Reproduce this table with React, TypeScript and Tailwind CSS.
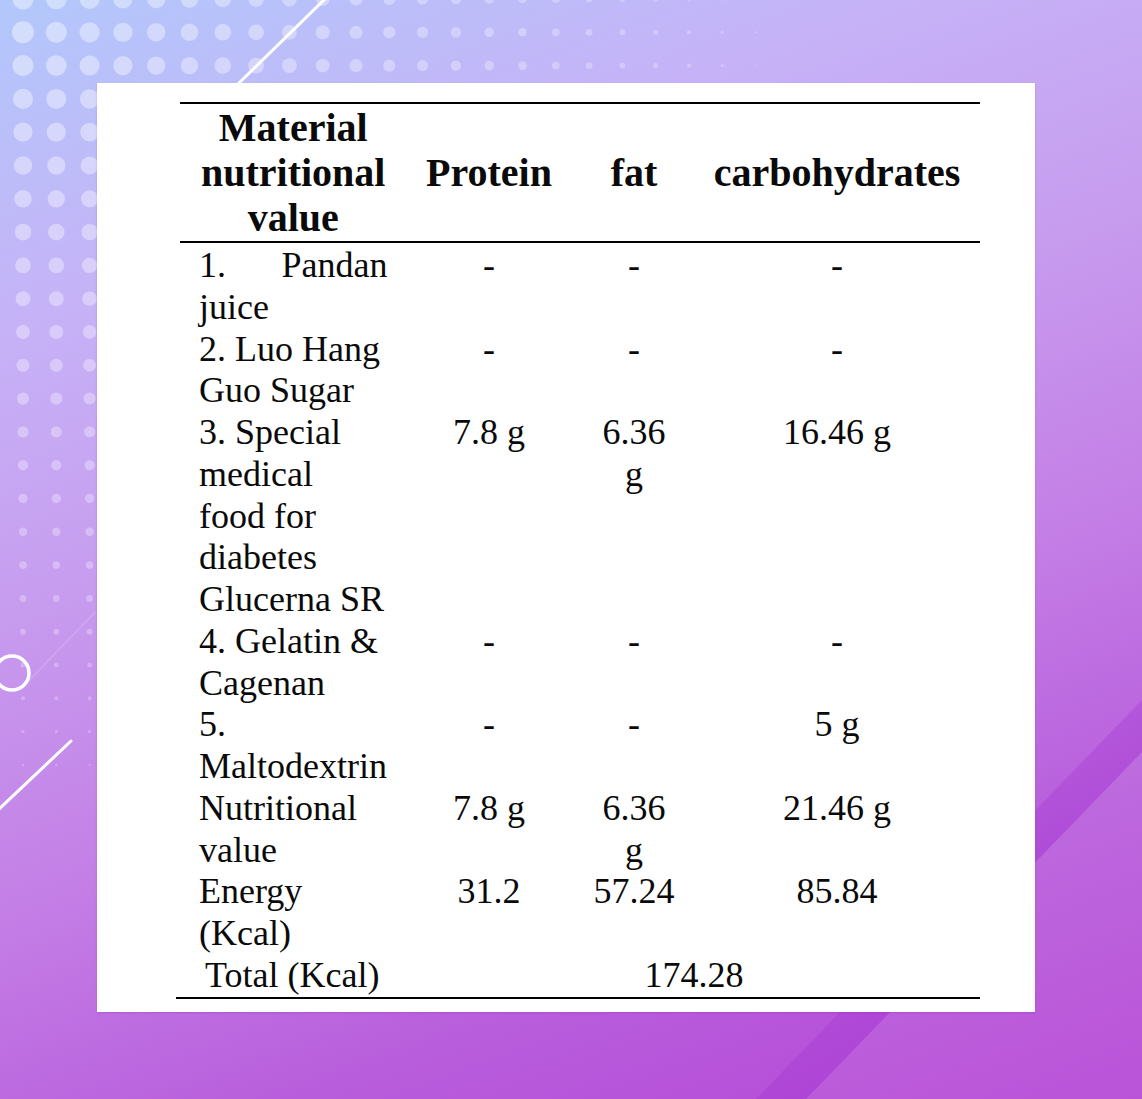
import React from 'react';

type Row = {
  label: string;
  protein: string;
  fat: string;
  carbs: string;
  justify?: boolean;
};

const rows: Row[] = [
  { label: '1. Pandan juice', protein: '-', fat: '-', carbs: '-', justify: true },
  { label: '2. Luo Hang Guo Sugar', protein: '-', fat: '-', carbs: '-' },
  { label: '3. Special medical food for diabetes Glucerna SR', protein: '7.8 g', fat: '6.36 g', carbs: '16.46 g' },
  { label: '4. Gelatin & Cagenan', protein: '-', fat: '-', carbs: '-' },
  { label: '5. Maltodextrin', protein: '-', fat: '-', carbs: '5 g' },
  { label: 'Nutritional value', protein: '7.8 g', fat: '6.36 g', carbs: '21.46 g' },
  { label: 'Energy (Kcal)', protein: '31.2', fat: '57.24', carbs: '85.84' },
];

const Backdrop: React.FC = () => {
  const dots: { x: number; y: number; r: number; o: number }[] = [];
  for (let i = 0; i < 30; i++) {
    for (let j = 0; j < 30; j++) {
      const x = 23 + i * 33.3;
      const y = -1 + j * 33.3;
      const d = Math.hypot(x - 23, y - 32);
      const r = 11 * (1 - d / 820);
      if (r < 0.8) continue;
      dots.push({ x, y, r, o: 0.22 + 0.2 * (r / 11) });
    }
  }

  return (
    <svg className="absolute inset-0 h-full w-full" viewBox="0 0 1142 1099" preserveAspectRatio="none">
      <defs>
        <linearGradient id="shade" x1="0" y1="0" x2="1" y2="1">
          <stop offset="0" stopColor="#a030d0" stopOpacity="0" />
          <stop offset="1" stopColor="#a030d0" stopOpacity="0.6" />
        </linearGradient>
      </defs>
      {dots.map((d, k) => (
        <circle key={k} cx={d.x} cy={d.y} r={d.r} fill="#ffffff" fillOpacity={d.o} />
      ))}
      <polygon points="1142,700 1142,752 806,1099 756,1099" fill="url(#shade)" />
      <polygon points="1142,752 1142,1099 806,1099" fill="#ffffff" fillOpacity="0.07" />
      <line x1="95" y1="612" x2="20" y2="690" stroke="#ffffff" strokeOpacity="0.12" strokeWidth="2" />
      <line x1="238" y1="84" x2="328" y2="-4" stroke="#ffffff" strokeWidth="3" strokeLinecap="round" />
      <line x1="-2" y1="810" x2="71" y2="741" stroke="#ffffff" strokeWidth="3" strokeLinecap="round" />
      <circle cx="12" cy="673" r="17" fill="none" stroke="#ffffff" strokeWidth="3.5" />
    </svg>
  );
};

const App: React.FC = () => {
  return (
    <div className="relative h-[1099px] w-full overflow-hidden bg-[linear-gradient(160deg,#b2c8fb_0%,#c6b2f7_22%,#c79def_40%,#c47fe6_60%,#b85ddc_80%,#b546d6_100%)] font-[family-name:Liberation_Serif,serif] text-[#0a0a0a]">
      <Backdrop />
      <div className="relative pt-[83px] pl-[97px]">
        <div className="h-[929px] w-[938px] bg-white pt-[19px] shadow-[0_1px_2px_rgba(120,40,160,0.25)]">
          <table className="ml-[83px] w-[800px] table-fixed border-collapse border-t-2 border-black">
            <colgroup>
              <col className="w-[228px]" />
              <col className="w-[162px]" />
              <col className="w-[128px]" />
              <col className="w-[282px]" />
            </colgroup>
            <thead>
              <tr className="h-[139px] border-b-2 border-black text-[40px] leading-[45px] font-bold">
                <th className="pl-[19px] pr-[20.5px] text-center align-middle">Material nutritional value</th>
                <th className="text-center align-middle">Protein</th>
                <th className="text-center align-middle">fat</th>
                <th className="pr-[4px] text-center align-middle">carbohydrates</th>
              </tr>
            </thead>
            <tbody className="text-[36px] leading-[41.75px]">
              {rows.map((row, i) => (
                <tr key={row.label} className={`align-top ${i === 0 ? '[&>td]:pt-[2px]' : ''}`}>
                  <td className={`pl-[19px] pr-[20.5px] ${row.justify ? 'text-justify' : 'text-left'}`}>{row.label}</td>
                  <td className="text-center">{row.protein}</td>
                  <td className="px-[22px] text-center">{row.fat}</td>
                  <td className="pr-[4px] text-center">{row.carbs}</td>
                </tr>
              ))}
              <tr className="align-top">
                <td className="pl-[25px] text-left whitespace-nowrap">Total (Kcal)</td>
                <td colSpan={3} className="text-center">174.28</td>
              </tr>
            </tbody>
          </table>
          <div className="ml-[79px] h-[2px] w-[804px] bg-black" />
        </div>
      </div>
    </div>
  );
};

export default App;
